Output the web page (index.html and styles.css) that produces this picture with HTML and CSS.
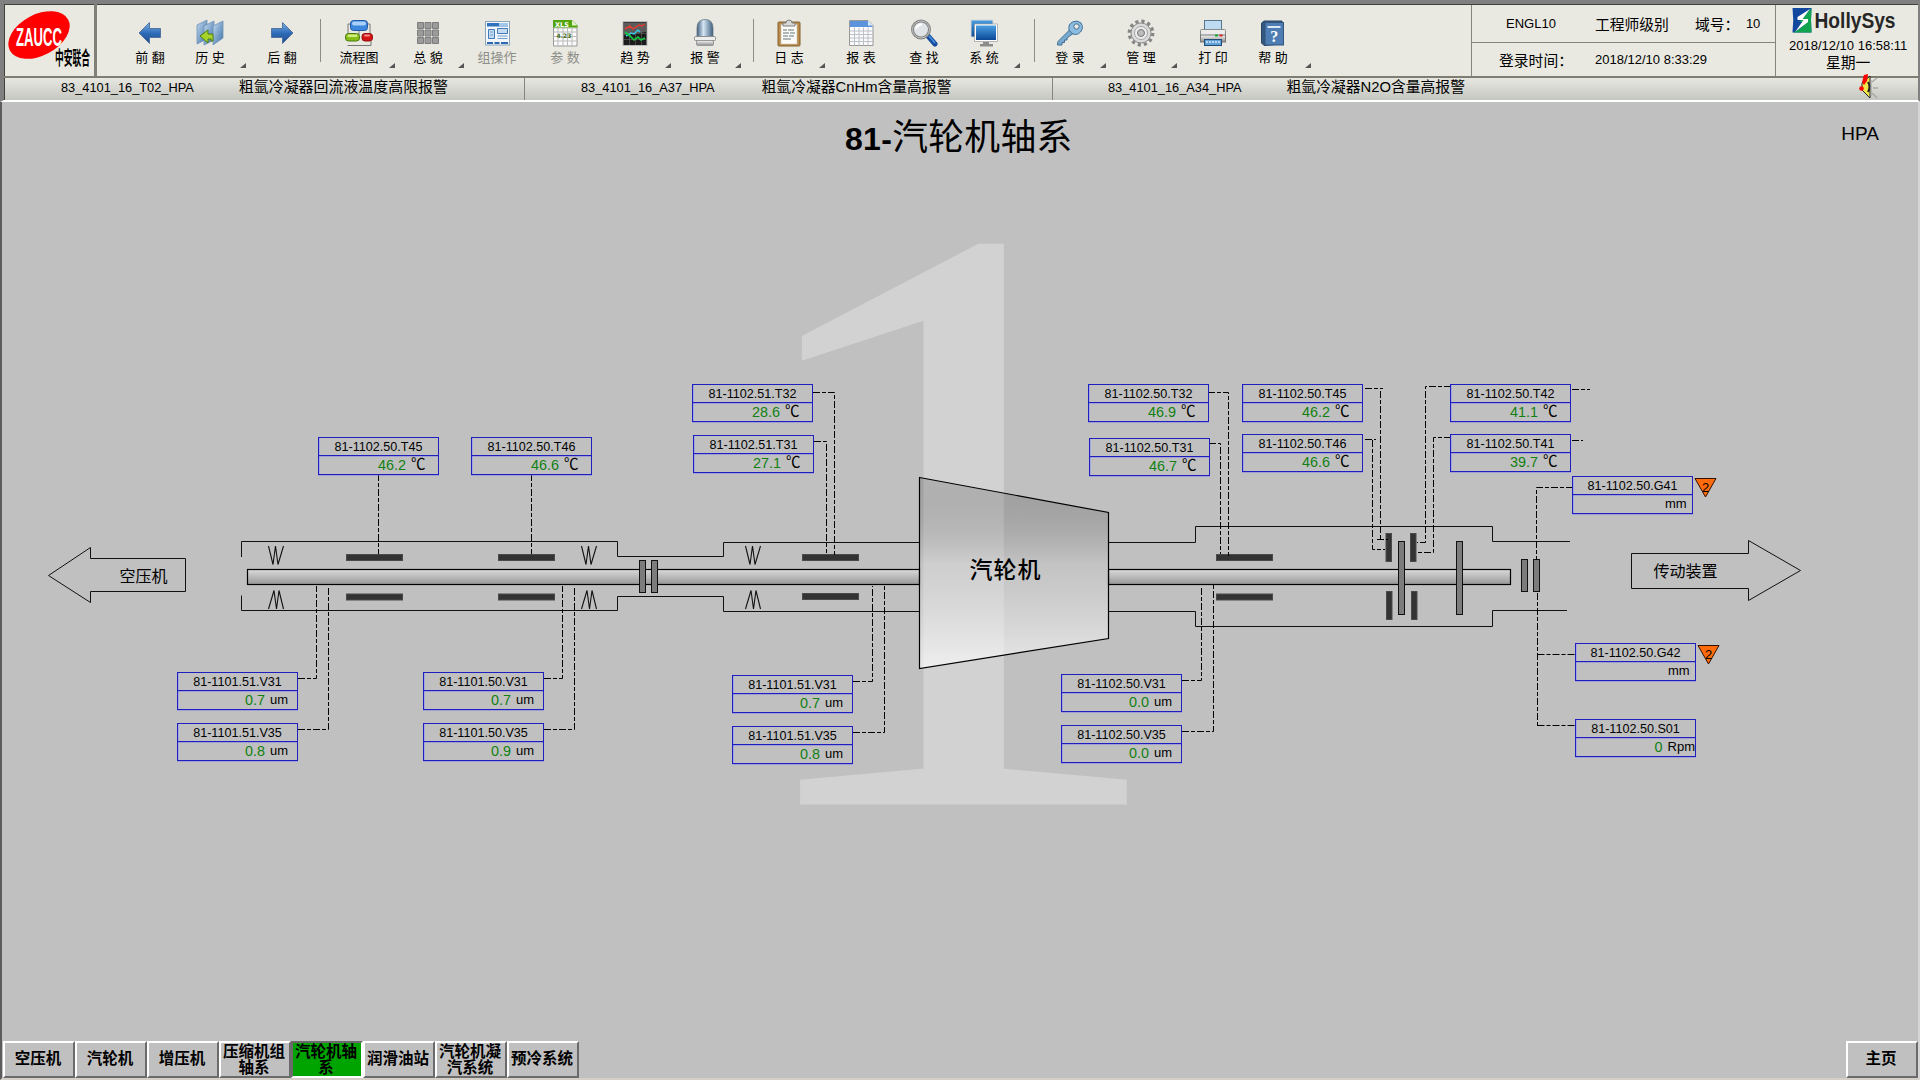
FILE: index.html
```html
<!DOCTYPE html>
<html lang="zh-CN">
<head>
<meta charset="utf-8">
<title>81-汽轮机轴系</title>
<link rel="stylesheet" href="styles.css">
</head>
<body>
<svg class="defs" width="0" height="0" aria-hidden="true">
  <defs>
    <linearGradient id="blue" x1="0" y1="0" x2="0" y2="1"><stop offset="0" stop-color="#7db4ea"/><stop offset=".5" stop-color="#2f6db8"/><stop offset="1" stop-color="#1d4a8c"/></linearGradient>
    <linearGradient id="screen" x1="0" y1="0" x2="0" y2="1"><stop offset="0" stop-color="#4aa0e4"/><stop offset="1" stop-color="#0b4796"/></linearGradient>
    <linearGradient id="glass" x1="0" y1="0" x2="1" y2="0"><stop offset="0" stop-color="#3f5f7c"/><stop offset=".4" stop-color="#d5e6f4"/><stop offset="1" stop-color="#3f607e"/></linearGradient>
    <linearGradient id="metal" x1="0" y1="0" x2="0" y2="1"><stop offset="0" stop-color="#f6f6f6"/><stop offset="1" stop-color="#8c8c8c"/></linearGradient>
    <linearGradient id="pane" x1="0" y1="0" x2="1" y2="1"><stop offset="0" stop-color="#c4dcf0"/><stop offset="1" stop-color="#3a6ea6"/></linearGradient>
  </defs>
</svg>
<header class="top">
  <div class="brand">
    <svg width="88" height="71" viewBox="5 5 88 71">
      <ellipse cx="39" cy="35" rx="33" ry="20.5" transform="rotate(-28 39 35)" fill="#f00"/>
      <text x="16" y="45.5" class="brand-en" textLength="46" lengthAdjust="spacingAndGlyphs">ZAUCC</text>
      <text x="55" y="65" class="brand-cn" textLength="35" lengthAdjust="spacingAndGlyphs">中安联合</text>
    </svg>
  </div>
  <nav class="tools">
    <div class="tool"><svg class="icon" viewBox="0 0 28 28"><path d="M3 14L13.500 3.500V9.500H24.500V18.500H13.500V24.500Z" fill="url(#blue)" stroke="#54739c"/></svg><span>前 翻</span></div>
    <div class="tool more"><svg class="icon" viewBox="0 0 28 28"><g fill="url(#pane)" stroke="#6f92b8" stroke-width=".8"><path d="M1 6L11 1V20L1 25Z"/><path d="M8 7L18 2V21L8 26Z"/><path d="M17 7L27 2V19L17 26Z"/></g><path d="M4 17L12 11V15H17V22H15V20H12V24Z" fill="#a5d32a" stroke="#4c7d12"/></svg><span>历 史</span></div>
    <div class="tool"><svg class="icon" viewBox="0 0 28 28"><path d="M25 14L14.500 3.500V9.500H3.500V18.500H14.500V24.500Z" fill="url(#blue)" stroke="#54739c"/></svg><span>后 翻</span></div>
    <i class="rule"></i>
    <div class="tool more"><svg class="icon" viewBox="0 0 28 28"><path d="M6 5H3V15M22 5H25V15M2.500 26.500H26V22M14 12V16" fill="none" stroke="#777"/><rect x="5.500" y="1.500" width="17" height="10" rx="3" fill="#3d86dd" stroke="#2158a6"/><rect x="7" y="2.500" width="14" height="4" rx="2" fill="#a7d0fa"/><rect x=".5" y="14.500" width="14" height="7.500" rx="3" fill="#86bd16" stroke="#4a7a0c"/><rect x="2.500" y="15.500" width="10" height="2.500" rx="1" fill="#d3ee80"/><rect x="17" y="14.500" width="10.500" height="7.500" rx="3" fill="#d41414" stroke="#8f0c0c"/><rect x="19" y="15.500" width="6" height="2" rx="1" fill="#f58a8a"/></svg><span>流程图</span></div>
    <div class="tool more"><svg class="icon" viewBox="0 0 28 28"><g fill="#9c9c9c" stroke="#7c7c7c"><path d="M3.500 3.500h6v6h-6zM11 3.500h6v6h-6zM18.500 3.500h6v6h-6zM3.500 11h6v6h-6zM11 11h6v6h-6zM18.500 11h6v6h-6zM3.500 18.500h6v6h-6zM11 18.500h6v6h-6zM18.500 18.500h6v6h-6z"/></g></svg><span>总 貌</span></div>
    <div class="tool off"><svg class="icon" viewBox="0 0 28 28"><rect x="2.500" y="2.500" width="24" height="23.500" fill="#f3f7fb" stroke="#8da4bd"/><rect x="4" y="4" width="21" height="3.500" fill="#2f73bd"/><rect x="16" y="4" width="9" height="3.500" fill="#a5c8ea"/><path d="M5.500 10.500h6v9h-6zM14.500 9.500h10v5h-10z" fill="#c4dbf1" stroke="#3f79b8"/><path d="M14.500 17h10M14.500 19.500h10M7 13h3M7 16h3" stroke="#6f9dcc"/><path d="M4 24h6M11.500 24h5M18 24h7" stroke="#2c69b0" stroke-width="2"/></svg><span>组操作</span></div>
    <div class="tool off"><svg class="icon" viewBox="0 0 28 28"><path d="M2.500 1.500H21.500L26 6V27H2.500Z" fill="#fafafa" stroke="#999"/><path d="M3 9h23M3 13h23M3 17.500h23M3 22h23M7 9v18M12 9v18M16.500 9v18M21 9v18" stroke="#bbb"/><path d="M2 1H21L26.500 6.500V8.500H2Z" fill="#53a50f"/><path d="M21 1V6.500H26.500Z" fill="#dff3c7"/><text x="4" y="7.500" class="xls">XLS</text><text x="5.500" y="18.500" class="num">4.23</text></svg><span>参 数</span></div>
    <div class="tool more"><svg class="icon" viewBox="0 0 28 28"><rect x="2" y="2.500" width="24" height="24" fill="#1c1c1c" stroke="#bbb"/><path d="M3 3.500H25V13L3 16Z" fill="#5a5a5a"/><path d="M3 8.500h22M3 14.500h22M3 20.500h22M8.500 4v22M14.500 4v22M20.500 4v22" stroke="#666" stroke-width=".6"/><path d="M4 10L9 7L12 10L18 6L21 7L24 5" fill="none" stroke="#e63b32" stroke-width="1.500"/><path d="M5 17L10 14L13 15L17 11L19 13" fill="none" stroke="#3bc6e6" stroke-width="1.500"/><path d="M4 13L9 17L13 21L17 18L20 21L24 19" fill="none" stroke="#14c840" stroke-width="1.700"/></svg><span>趋 势</span></div>
    <div class="tool more"><svg class="icon" viewBox="0 0 28 28"><path d="M6 18V9Q6 .500 14 .500Q22 .500 22 9V18Z" fill="url(#glass)" stroke="#5b6c7c" stroke-width=".7"/><rect x="3.500" y="17.500" width="21" height="4" rx="1" fill="#eee" stroke="#8d8d8d"/><rect x="5.500" y="21.500" width="17" height="5" rx="1.500" fill="url(#metal)" stroke="#999"/></svg><span>报 警</span></div>
    <i class="rule"></i>
    <div class="tool more"><svg class="icon" viewBox="0 0 28 28"><rect x="3" y="3" width="22" height="24" rx="1" fill="#b98a4b" stroke="#83602e"/><rect x="6" y="5.500" width="16" height="19.500" fill="#fbfbf7" stroke="#c9c3b3" stroke-width=".6"/><path d="M8 11h4M13 11h6M8 14h6M15 14h5M8 17h5M14 17h5M8 20h8" stroke="#63767c" stroke-width="1.200"/><path d="M8 7V4H11Q11 1 14 1Q17 1 17 4H20V7Z" fill="#d8d8d8" stroke="#808080"/></svg><span>日 志</span></div>
    <div class="tool"><svg class="icon" viewBox="0 0 28 28"><path d="M2.500 1.500H21L26 6.500V26.500H2.500Z" fill="#fbfbfb" stroke="#989898"/><path d="M3 2H21L25.500 7V8H3Z" fill="#5b93dd"/><path d="M21 1.500V6.500H26Z" fill="#d7e6f8"/><path d="M3 12h23M3 15.500h23M3 19h23M3 22.500h23M7.500 8.500v18M12 8.500v18M16.500 8.500v18M21 8.500v18" stroke="#bbc0c8"/></svg><span>报 表</span></div>
    <div class="tool"><svg class="icon" viewBox="0 0 28 28"><path d="M18 17L25 25" stroke="#164d9f" stroke-width="5" stroke-linecap="round"/><path d="M19 17L25 24" stroke="#4f94e0" stroke-width="1.500"/><circle cx="11" cy="10.500" r="8.500" fill="#e1e4e6" stroke="#858585" stroke-width="3"/><circle cx="11" cy="10.500" r="8.500" fill="none" stroke="#c2c2c2"/><path d="M6 10Q7 5.500 12 5.500" fill="none" stroke="#fff" stroke-width="2"/></svg><span>查 找</span></div>
    <div class="tool more"><svg class="icon" viewBox="0 0 28 28"><rect x="1" y="1" width="22" height="17" fill="url(#screen)" stroke="#d7d7d7"/><rect x="4.500" y="5" width="23" height="17.500" fill="#fff" stroke="#999" stroke-width=".7"/><rect x="6" y="6.500" width="20" height="14.500" fill="url(#screen)"/><path d="M13 23h6v2h4v2.500H10V25h3z" fill="#8c8c8c"/></svg><span>系 统</span></div>
    <i class="rule"></i>
    <div class="tool more"><svg class="icon" viewBox="0 0 28 28"><path d="M13.500 11L2 22.500L1.500 26H6V23.500H8.500V21H11V19L17 14.500Z" fill="#78aad0" stroke="#3d6f96"/><path d="M13 11Q12 5 16.500 3Q21 .500 25 4Q28 9 24.500 13Q21 17 16 14.500Z" fill="#8cbcdf" stroke="#3d6f96"/><circle cx="20.500" cy="7.500" r="2.700" fill="#e9e9e1" stroke="#3d6f96"/></svg><span>登 录</span></div>
    <div class="tool more"><svg class="icon" viewBox="0 0 28 28"><circle cx="14" cy="14" r="11.800" fill="none" stroke="#858585" stroke-width="3.200" stroke-dasharray="3.200 2.980"/><circle cx="14" cy="14" r="10" fill="#dadada" stroke="#8b8b8b"/><circle cx="14" cy="14" r="6.500" fill="#ededed" stroke="#a4a4a4"/><circle cx="14" cy="14" r="3.500" fill="#bcbcbc" stroke="#777"/></svg><span>管 理</span></div>
    <div class="tool"><svg class="icon" viewBox="0 0 28 28"><rect x="5.500" y="1.500" width="17" height="11" fill="#bddcf2" stroke="#55768f"/><rect x="1.500" y="10.500" width="25" height="6" rx="1" fill="#ececec" stroke="#8a8a8a"/><rect x="1.500" y="16" width="25" height="7" fill="url(#metal)" stroke="#777"/><rect x="16" y="15.500" width="3" height="2" fill="#18a428"/><rect x="20.500" y="15.500" width="3" height="2" fill="#d22"/><rect x="5.500" y="20.500" width="17" height="6" fill="#5f9fd6" stroke="#234d77"/><path d="M7 23h14" stroke="#dcecfa" stroke-width="1.500" stroke-dasharray="2 1"/></svg><span>打 印</span></div>
    <div class="tool"><svg class="icon" viewBox="0 0 28 28"><path d="M2.500 4L5 2H23V25L5 26.500L2.500 24Z" fill="#35587f" stroke="#2a4668"/><rect x="6" y="3.500" width="18.500" height="22.500" fill="#4e7db4" stroke="#31557f"/><path d="M8.500 8h13" stroke="#dbe8f5" stroke-width="2"/><text x="15.200" y="22.500" class="ask">?</text></svg><span>帮 助</span></div>
    <i class="corner"></i>
  </nav>
  <section class="session">
    <div class="session-row row-user"><span class="en">ENGL10</span><span>工程师级别</span><span>域号：</span><span class="en">10</span></div>
    <div class="session-row row-login"><span>登录时间：</span><span class="en">2018/12/10 8:33:29</span></div>
  </section>
  <section class="vendor">
    <svg width="110" height="30" viewBox="1790 5 110 30">
      <path d="M1793.500 8H1812.500Q1811.500 20 1812.500 32.500H1793.500Q1795 20 1793.500 8Z" fill="#1247a0"/>
      <path d="M1812.500 8Q1811.500 20 1812.500 32.500H1794Q1804 28 1807 22H1800L1812.500 8Z" fill="#10a450"/>
      <path d="M1811 9L1798.500 17V20H1804.500L1796.500 31.500L1809 22V19H1803.500Z" fill="#fff"/>
      <text x="1815.500" y="28" class="holly" textLength="81" lengthAdjust="spacingAndGlyphs">HollySys</text>
    </svg>
    <span class="en">2018/12/10 16:58:11</span>
    <span class="day">星期一</span>
  </section>
</header>
<section class="alarms">
  <div class="alarm alarm-a"><span class="en">83_4101_16_T02_HPA</span><span>粗氩冷凝器回流液温度高限报警</span></div>
  <div class="alarm alarm-b"><span class="en">83_4101_16_A37_HPA</span><span>粗氩冷凝器CnHm含量高报警</span></div>
  <div class="alarm alarm-c"><span class="en">83_4101_16_A34_HPA</span><span>粗氩冷凝器N2O含量高报警</span>
    <svg class="horn" width="20" height="26" viewBox="0 0 20 26"><path d="M3 9L11 2V24L3 16Z" fill="#f1e64a" stroke="#222"/><path d="M9 8Q12 13 9 18" fill="none" stroke="#222" stroke-width="2"/><path d="M3 8L5 1L9 0L8 7L5 11Z" fill="#f00"/><circle cx="2.500" cy="14.500" r="2.300" fill="#f00"/><path d="M13 8L18 4M14 14H19M13 19L18 24" stroke="#aaa" stroke-width="1.500"/><path d="M12 6V22" stroke="#999"/></svg>
  </div>
</section>
<main class="canvas">
  <svg class="diagram" width="1916" height="976" viewBox="2 102 1916 976">
    <defs>
      <linearGradient id="shaft" x1="0" y1="0" x2="0" y2="1"><stop offset="0" stop-color="#dadada"/><stop offset="1" stop-color="#989898"/></linearGradient>
      <linearGradient id="turbine" x1="0" y1="0" x2="0" y2="1"><stop offset="0" stop-color="#000" stop-opacity=".15"/><stop offset=".45" stop-color="#c8c8c8" stop-opacity=".4"/><stop offset="1" stop-color="#fff" stop-opacity=".65"/></linearGradient>
      <path id="seal" d="M0 0L4.500 18.500L7 0L9.500 18.500L15 0" fill="none" stroke="#111" stroke-width="1.100"/>
    </defs>
    <text class="mark" transform="translate(721 803) scale(1.087 1)">1</text>
    <g class="wire">
      <path d="M241.500 557V541.500H617.500V556.500H723.500V542.500H919M241.500 595.500V610.500H617.500V596.500H723.500V611.500H919"/>
      <path d="M1108 542.500H1195.500V526.500H1492.500V541.500H1570M1108 611.500H1195.500V626.500H1492.500V610.500H1567"/>
      <path d="M48.500 575.500L90.500 547.500V558.500H185.500V591.500H90.500V602.500Z"/>
      <path d="M1631.500 553.500H1748.500V540.500L1800.500 570.500L1748.500 600.500V588.500H1631.500Z"/>
    </g>
    <g fill="url(#shaft)" stroke="#000" stroke-width="1.200"><rect x="247.500" y="569.500" width="672" height="15"/><rect x="1108.500" y="569.500" width="402" height="15"/></g>
    <path d="M919.500 477.500L1108.500 512.500V638.500L919.500 668.500Z" fill="url(#turbine)" stroke="#000" stroke-width="1.200"/>
    <g class="pad">
      <rect x="346.500" y="554.500" width="56" height="6"/><rect x="346.500" y="594" width="56" height="6"/>
      <rect x="498.500" y="554.500" width="56" height="6"/><rect x="498.500" y="594" width="56" height="6"/>
      <rect x="802.500" y="554.500" width="56" height="6"/><rect x="802.500" y="593.500" width="56" height="6"/>
      <rect x="1216.500" y="554.500" width="56" height="6"/><rect x="1216.500" y="594" width="56" height="6"/>
      <rect x="1386" y="533.500" width="5.500" height="28"/><rect x="1410.500" y="533.500" width="5.500" height="28"/>
      <rect x="1386.500" y="591.500" width="5.500" height="28"/><rect x="1411.500" y="591.500" width="5.500" height="28"/>
    </g>
    <g class="disc">
      <rect x="639.500" y="560.500" width="6" height="32"/><rect x="651.500" y="560.500" width="6" height="32"/>
      <rect x="1398.500" y="541.500" width="6" height="73"/><rect x="1456.500" y="541.500" width="6" height="73"/>
      <rect x="1521.500" y="559.500" width="6" height="32"/><rect x="1533.500" y="559.500" width="6" height="32"/>
    </g>
    <use href="#seal" x="268.500" y="546"/><use href="#seal" x="581.500" y="546"/><use href="#seal" x="745.500" y="546"/>
    <use href="#seal" transform="translate(283.500 609) rotate(180)"/><use href="#seal" transform="translate(596.500 609) rotate(180)"/><use href="#seal" transform="translate(760.500 609) rotate(180)"/>
    <g class="dash">
      <path d="M378.500 474V554M531.500 474V554"/>
      <path d="M298 678.500H316.500V586M298 729.500H328.500V586M544 678.500H562.500V586M544 729.500H574.500V586"/>
      <path d="M813 392.500H834.500V555M814 441.500H826.500V553M853 681.500H872.500V586M853 732.500H884.500V585"/>
      <path d="M1208 392.500H1228.500V556M1209 443.500H1220.500V554M1182 680.500H1201.500V586M1182 731.500H1213.500V585"/>
      <path d="M1365 388.500H1383M1380.500 391V539.500M1377 539.500H1388M1365 439.500H1376M1372.500 440V549.500H1385"/>
      <path d="M1451 386.500H1425.500V542.500H1417M1451 437.500H1433.500V552.500H1417M1572 389.500H1590M1572 440.500H1583"/>
      <path d="M1573 487.500H1536.500V560M1537.500 593V728M1537.500 654.500H1575M1537.500 725.500H1575"/>
    </g>
    <g fill="#ff6a0a" stroke="#301000"><path d="M1695 478.500H1716L1705.500 497Z"/><path d="M1698 645.500H1719L1708.500 664Z"/></g>
    <g class="prio"><text x="1705.500" y="491.500">2</text><text x="1708.500" y="658.500">2</text></g>
    <text class="dest" x="143.500" y="581.500">空压机</text>
    <text class="dest" x="1685.500" y="576.500">传动装置</text>
    <text class="machine" x="1005.500" y="578">汽轮机</text>
  </svg>
  <div class="heading"><h1><b>81-</b>汽轮机轴系</h1><span class="hpa">HPA</span></div>

  <div class="tag t-a1"><b>81-1102.50.T45</b><p><i>46.2</i><em class="deg">℃</em></p></div>
  <div class="tag t-a2"><b>81-1102.50.T46</b><p><i>46.6</i><em class="deg">℃</em></p></div>
  <div class="tag t-a3"><b>81-1101.51.V31</b><p><i>0.7</i><em>um</em></p></div>
  <div class="tag t-a4"><b>81-1101.51.V35</b><p><i>0.8</i><em>um</em></p></div>
  <div class="tag t-a5"><b>81-1101.50.V31</b><p><i>0.7</i><em>um</em></p></div>
  <div class="tag t-a6"><b>81-1101.50.V35</b><p><i>0.9</i><em>um</em></p></div>
  <div class="tag t-b1"><b>81-1102.51.T32</b><p><i>28.6</i><em class="deg">℃</em></p></div>
  <div class="tag t-b2"><b>81-1102.51.T31</b><p><i>27.1</i><em class="deg">℃</em></p></div>
  <div class="tag t-b3"><b>81-1101.51.V31</b><p><i>0.7</i><em>um</em></p></div>
  <div class="tag t-b4"><b>81-1101.51.V35</b><p><i>0.8</i><em>um</em></p></div>
  <div class="tag t-c1"><b>81-1102.50.T32</b><p><i>46.9</i><em class="deg">℃</em></p></div>
  <div class="tag t-c2"><b>81-1102.50.T31</b><p><i>46.7</i><em class="deg">℃</em></p></div>
  <div class="tag t-c3"><b>81-1102.50.V31</b><p><i>0.0</i><em>um</em></p></div>
  <div class="tag t-c4"><b>81-1102.50.V35</b><p><i>0.0</i><em>um</em></p></div>
  <div class="tag t-d1"><b>81-1102.50.T45</b><p><i>46.2</i><em class="deg">℃</em></p></div>
  <div class="tag t-d2"><b>81-1102.50.T46</b><p><i>46.6</i><em class="deg">℃</em></p></div>
  <div class="tag t-d3"><b>81-1102.50.T42</b><p><i>41.1</i><em class="deg">℃</em></p></div>
  <div class="tag t-d4"><b>81-1102.50.T41</b><p><i>39.7</i><em class="deg">℃</em></p></div>
  <div class="tag t-e1"><b>81-1102.50.G41</b><p><i></i><em>mm</em></p></div>
  <div class="tag t-e2"><b>81-1102.50.G42</b><p><i></i><em>mm</em></p></div>
  <div class="tag t-e3"><b>81-1102.50.S01</b><p><i>0</i><em>Rpm</em></p></div>

  <footer class="pages">
    <button>空压机</button><button>汽轮机</button><button>增压机</button><button>压缩机组<br>轴系</button><button class="on">汽轮机轴<br>系</button><button>润滑油站</button><button>汽轮机凝<br>汽系统</button><button>预冷系统</button><button class="home">主页</button>
  </footer>
</main>
</body>
</html>
```
FILE: styles.css
```css
* { box-sizing: border-box; }
body {
  margin: 0;
  width: 1920px;
  height: 1080px;
  overflow: hidden;
  display: flex;
  flex-direction: column;
  background: #c0c0c0;
  color: #000;
  font: 14.800px "Liberation Sans", "Noto Sans CJK SC", sans-serif;
}
.defs { position: absolute; }
.en { font-size: 13px; }

/* header */
.top {
  display: flex;
  flex: none;
  height: 78px;
  border: solid #808080;
  border-width: 4px 2px 0 4px;
  border-bottom: 2px solid #7d7d72;
  background: #e9e9e1;
  box-shadow: inset 1px 1px 0 #404040;
}
.brand { width: 93px; padding: 1px 0 0 1px; border-right: 3px solid #808076; }
.brand svg { display: block; }
.brand-en { font: bold 25px "Liberation Sans", sans-serif; fill: #fff; }
.brand-cn { font: bold 19px "Noto Sans CJK SC", sans-serif; fill: #000; }

.tools {
  flex: none;
  width: 1374px;
  padding: 15px 0 0 23px;
  display: grid;
  justify-items: start;
  grid-template-columns: 60px 72px 60px 17px 69px 69px 68px 70px 70px 72px 12px 72px 63px 60px 74px 12px 71px 72px 60px 60px 10px;
}
.tool {
  position: relative;
  width: 60px;
  display: flex;
  flex-direction: column;
  align-items: center;
  font-size: 13px;
  line-height: 16px;
  white-space: nowrap;
}
.icon { width: 28px; height: 28px; margin-bottom: 3px; }
.off { color: #8e8e8a; }
.more::after, .corner {
  content: "";
  width: 6px;
  height: 5px;
  background: #555;
  clip-path: polygon(100% 0, 100% 100%, 0 100%);
}
.more::after { position: absolute; left: 60px; top: 44px; }
.corner { margin: 44px 0 0 2px; }
.rule { justify-self: center; width: 1px; height: 43px; background: #8d8d84; }
.xls { font: bold 6.500px "DejaVu Sans", sans-serif; fill: #fff; }
.num { font: bold 6px "DejaVu Sans", sans-serif; fill: #3f6c14; }
.ask { font: bold 16px "Liberation Serif", serif; fill: #fff; text-anchor: middle; }

.session { width: 305px; flex: none; border: solid #85857b; border-width: 0 1px; margin-top: 1px; }
.session-row { display: flex; align-items: center; }
.row-user { height: 38px; padding-left: 34px; border-bottom: 1px solid #85857b; }
.row-user span:nth-child(2) { margin-left: 39px; }
.row-user span:nth-child(3) { margin-left: 26px; width: 51px; white-space: nowrap; }
.row-login { height: 33px; padding-left: 27px; }
.row-login .en { margin-left: 22px; }
.vendor { flex: 1; display: flex; flex-direction: column; padding: 1px 0 0 13px; }
.vendor svg { display: block; }
.vendor > .en { line-height: 18px; margin-top: 2px; }
.day { margin-left: 37px; line-height: 17px; }
.holly { font: bold 22px "Liberation Sans", sans-serif; fill: #262626; }

/* alarm strip */
.alarms {
  flex: none;
  display: flex;
  height: 24px;
  border: solid #808080;
  border-width: 0 2px 2px 4px;
  border-bottom-color: #fff;
  background: linear-gradient(#e7e7e0, #c4c6c0);
  box-shadow: inset 1px 0 0 #404040;
  line-height: 18px;
}
.alarm { display: flex; white-space: nowrap; }
.alarm .en { font-size: 12.800px; line-height: 20px; }
.alarm-a { width: 521px; padding-left: 57px; border-right: 1px solid #85857b; font-size: 14.950px; }
.alarm-a span + span { margin-left: 45px; }
.alarm-b { width: 528px; padding-left: 56px; border-right: 1px solid #85857b; }
.alarm-b span + span { margin-left: 47px; }
.alarm-c { flex: 1; padding-left: 55px; }
.alarm-c span + span { margin-left: 45px; }
.horn { margin: -4px 39px 0 auto; position: relative; }

/* process picture */
.canvas {
  position: relative;
  flex: 1;
  display: flex;
  flex-direction: column;
  border: solid #5c5c5c;
  border-width: 0 2px 2px 2px;
  border-right-color: #d6d6d6;
  border-bottom-color: #d4d0c8;
}
.diagram { position: absolute; left: 0; top: 0; }
.mark { font: 845px "Liberation Serif", serif; fill: #d2d2d2; stroke: #d2d2d2; stroke-width: 3px; }
.wire { fill: none; stroke: #111; }
.dash { fill: none; stroke: #000; stroke-dasharray: 7 2 4 2; }
.pad { fill: #333; stroke: #4a4a4a; }
.disc { fill: #7c7c7c; stroke: #111; }
.prio { font-size: 13px; text-anchor: middle; }
.dest { font-size: 16px; text-anchor: middle; }
.machine { font-size: 23px; font-weight: 500; font-family: "Noto Sans CJK SC", sans-serif; letter-spacing: 1px; text-anchor: middle; }

.heading { position: relative; display: flex; justify-content: space-between; padding: 12px 39px 0 843px; }
h1 { margin: 0; font-size: 35.800px; font-weight: 400; line-height: 48px; letter-spacing: .3px; font-family: "Liberation Sans", "Noto Sans CJK SC", sans-serif; }
h1 b { font-size: 32px; }
.hpa { font-size: 19px; line-height: 22px; padding-top: 9px; }

.tag { position: absolute; width: 121px; height: 38px; border: 1px solid #1f1fc0; box-shadow: inset 1px 0 0 rgba(140, 140, 255, .5), 0 1px 0 rgba(120, 120, 235, .45); overflow: hidden; }
.tag b { display: block; height: 18px; border-bottom: 1px solid #1f1fc0; text-align: center; font-size: 12.600px; font-weight: 400; line-height: 18px; }
.tag p { display: flex; margin: 0; gap: 5px; line-height: 18px; box-shadow: inset 0 1px 0 rgba(120, 120, 235, .45); }
.tag i { width: 87px; text-align: right; font-size: 14.400px; font-style: normal; color: #128012; }
.tag em { font-style: normal; font-size: 13px; line-height: 17px; }
.tag .deg { font-family: "Noto Sans CJK SC", sans-serif; font-size: 14.500px; line-height: 14px; }
.t-a1 { left: 316px; top: 335px; }
.t-a2 { left: 469px; top: 335px; }
.t-a3 { left: 175px; top: 570px; }
.t-a4 { left: 175px; top: 621px; }
.t-a5 { left: 421px; top: 570px; }
.t-a6 { left: 421px; top: 621px; }
.t-b1 { left: 690px; top: 282px; }
.t-b2 { left: 691px; top: 333px; }
.t-b3 { left: 730px; top: 573px; }
.t-b4 { left: 730px; top: 624px; }
.t-c1 { left: 1086px; top: 282px; }
.t-c2 { left: 1087px; top: 336px; }
.t-c3 { left: 1059px; top: 572px; }
.t-c4 { left: 1059px; top: 623px; }
.t-d1 { left: 1240px; top: 282px; }
.t-d2 { left: 1240px; top: 332px; }
.t-d3 { left: 1448px; top: 282px; }
.t-d4 { left: 1448px; top: 332px; }
.t-e1 { left: 1570px; top: 374px; }
.t-e2 { left: 1573px; top: 541px; }
.t-e3 { left: 1573px; top: 617px; }

/* page buttons */
.pages { position: relative; display: flex; margin-top: auto; padding-left: 1px; }
.pages button {
  width: 72px;
  height: 37px;
  padding: 0 2px 4px 0;
  border: 2px solid;
  border-color: #fff #6b6b6b #6b6b6b #fff;
  background: #c0c0c0;
  color: #000;
  font: 600 15.500px/15.500px "Noto Sans CJK SC", sans-serif;
  white-space: nowrap;
}
.pages .on { background: #00a400; border-color: #6b6b6b #fff #fff #6b6b6b; }
.pages .home { margin-left: auto; }
```
